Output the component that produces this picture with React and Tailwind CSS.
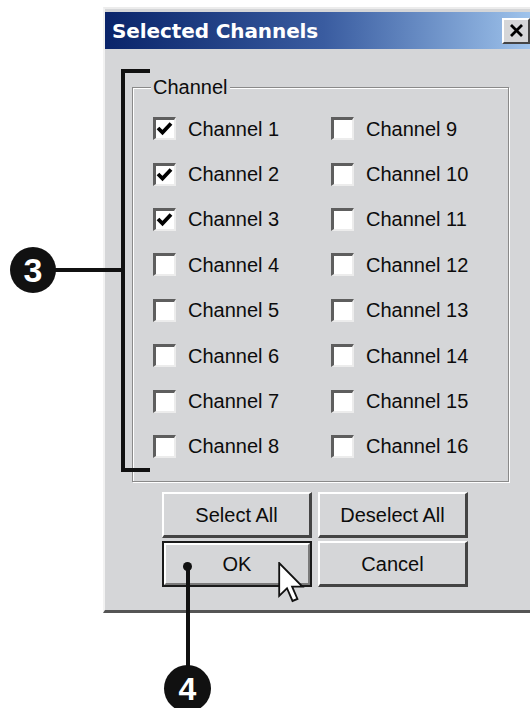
import React from "react";

function CheckBox({ checked }) {
  return (
    <div className="w-[23px] h-[23px] shrink-0 bg-white border-t-[3px] border-l-[3px] border-r-2 border-b-2 border-t-[#5e5e5e] border-l-[#5e5e5e] border-r-[#ececec] border-b-[#ececec] flex items-center justify-center">
      {checked && (
        <svg width="18" height="18" viewBox="0 0 18 18">
          <polyline points="2,8 6.5,12.5 15,3.5" fill="none" stroke="#000" strokeWidth="3.8" />
        </svg>
      )}
    </div>
  );
}

function Item({ n, checked }) {
  return (
    <div className="flex items-center h-[45.4px]">
      <CheckBox checked={checked} />
      <span className="ml-[12px] text-[20px] leading-none text-[#0c0c0c]">Channel {n}</span>
    </div>
  );
}

function Btn({ children, isDefault }) {
  if (isDefault) {
    return (
      <div className="h-[46px] border-2 border-[#1a1a1a] flex">
        <div className="flex-1 flex items-center justify-center border-t-2 border-l-2 border-r-2 border-b-2 border-t-white border-l-white border-r-[#7a7a7a] border-b-[#7a7a7a] text-[20px] text-[#0c0c0c]">
          {children}
        </div>
      </div>
    );
  }
  return (
    <div className="h-[46px] flex items-center justify-center border-t-2 border-l-2 border-r-[3px] border-b-[3px] border-t-white border-l-white border-r-[#444] border-b-[#444] text-[20px] text-[#0c0c0c]">
      {children}
    </div>
  );
}

export default function App() {
  const left = [1, 2, 3, 4, 5, 6, 7, 8];
  return (
    <div className="relative w-[530px] h-[708px] bg-white overflow-hidden font-['Liberation_Sans',Arial,sans-serif]">
      <div className="ml-[103px] mt-[7px] w-[440px] h-[606px] bg-[#d5d6d8] border-l-2 border-t-2 border-b-[3px] border-l-[#f2f2f2] border-t-[#ececec] border-b-[#555] flex flex-col">
        <div className="mt-[3px] h-[37px] bg-linear-to-r from-[#0a246a] via-[#3a5ca0] to-[#a6caf0] flex items-center justify-between pl-[7px] pr-[13px]">
          <span className="text-white font-bold text-[20px] font-['DejaVu_Sans',sans-serif] tracking-[-0.1px]">
            Selected Channels
          </span>
          <div className="w-[28px] h-[26px] bg-[#d5d6d8] border-t-2 border-l-2 border-r-2 border-b-2 border-t-white border-l-white border-r-[#444] border-b-[#444] flex items-center justify-center">
            <svg width="15" height="13" viewBox="0 0 15 13">
              <path d="M2 1 L13 12 M13 1 L2 12" stroke="#000" strokeWidth="2.8" />
            </svg>
          </div>
        </div>

        <div className="relative ml-[27px] mt-[38px] w-[377px] h-[395px] border border-[#8a8a8a] shadow-[inset_1px_1px_0_#fff,1px_1px_0_#fff]">
          <span className="absolute -top-[12px] left-[18px] px-[2px] bg-[#d5d6d8] text-[20px] leading-[22px] text-[#0c0c0c]">
            Channel
          </span>
          <div className="pt-[18px] pl-[20px] grid grid-cols-[178px_178px]">
            <div className="flex flex-col">
              {left.map((n) => (
                <Item key={n} n={n} checked={n <= 3} />
              ))}
            </div>
            <div className="flex flex-col">
              {left.map((n) => (
                <Item key={n} n={n + 8} checked={false} />
              ))}
            </div>
          </div>
        </div>

        <div className="ml-[57px] mt-[10px] grid grid-cols-[150px_150px] gap-x-[6px] gap-y-[3px]">
          <Btn>Select All</Btn>
          <Btn>Deselect All</Btn>
          <Btn isDefault>OK</Btn>
          <Btn>Cancel</Btn>
        </div>
      </div>

      {/* bracket annotation */}
      <div className="absolute left-[121px] top-[69px] w-[29px] h-[403px] border-l-4 border-t-4 border-b-4 border-[#111]" />
      <div className="absolute left-[55px] top-[268px] w-[67px] h-[4px] bg-[#111]" />
      <div className="absolute left-[10px] top-[247px] w-[46px] h-[46px] rounded-full bg-[#111] flex items-center justify-center text-white font-bold text-[34px] leading-none font-['Liberation_Sans',Arial,sans-serif]">
        3
      </div>

      {/* OK annotation */}
      <div className="absolute left-[183px] top-[562px] w-[9px] h-[9px] rounded-full bg-[#111]" />
      <div className="absolute left-[185.5px] top-[566px] w-[4px] h-[102px] bg-[#111]" />
      <div className="absolute left-[164px] top-[665px] w-[47px] h-[47px] rounded-full bg-[#111] flex items-center justify-center text-white font-bold text-[32px] leading-none font-['Liberation_Sans',Arial,sans-serif]">
        4
      </div>

      {/* cursor */}
      <svg className="absolute left-[276px] top-[562px]" width="31" height="41" viewBox="0 0 13 20">
        <path d="M0.5 0.5 L0.5 16.5 L4.3 12.8 L7 19 L9.4 18 L6.8 12 L11.8 12 Z" fill="#fff" stroke="#111" strokeWidth="0.9" strokeLinejoin="miter" />
      </svg>
    </div>
  );
}
